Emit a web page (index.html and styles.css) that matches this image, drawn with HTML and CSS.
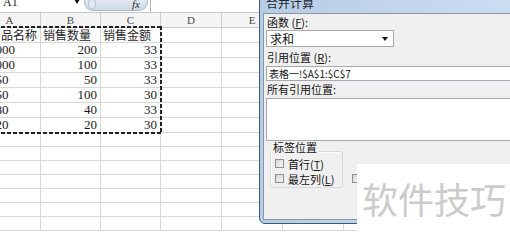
FILE: index.html
```html
<html>
	<head>
		<title>合并计算</title>
		<link rel="stylesheet" href="styles.css">
	</head>
	<body>
		<div class="sheet">
			<div class="formulabar">
				<div class="namebox"><span class="name">A1</span><span class="namearrow"></span></div>
				<div class="fxpill"><span class="knob"></span><span class="fx">fx</span></div>
				<div class="formula"></div>
			</div>
			<table class="grid">
				<colgroup>
					<col class="cola"><col class="colb"><col class="colb"><col class="colc"><col class="colc"><col class="colc"><col class="colc"><col class="colc"><col class="colc">
				</colgroup>
				<tr class="head"><th>A</th><th>B</th><th>C</th><th>D</th><th>E</th><th>F</th><th>G</th><th>H</th><th>I</th></tr>
				<tr><td class="first">产品名称</td><td class="txt">销售数量</td><td class="txt">销售金额</td><td></td><td></td><td></td><td></td><td></td><td></td></tr>
				<tr><td class="first">1000</td><td class="num">200</td><td class="num">33</td><td></td><td></td><td></td><td></td><td></td><td></td></tr>
				<tr><td class="first">2000</td><td class="num">100</td><td class="num">33</td><td></td><td></td><td></td><td></td><td></td><td></td></tr>
				<tr><td class="first">350</td><td class="num">50</td><td class="num">33</td><td></td><td></td><td></td><td></td><td></td><td></td></tr>
				<tr><td class="first">450</td><td class="num">100</td><td class="num">30</td><td></td><td></td><td></td><td></td><td></td><td></td></tr>
				<tr><td class="first">380</td><td class="num">40</td><td class="num">33</td><td></td><td></td><td></td><td></td><td></td><td></td></tr>
				<tr><td class="first">120</td><td class="num">20</td><td class="num">30</td><td></td><td></td><td></td><td></td><td></td><td></td></tr>
				<tr><td></td><td></td><td></td><td></td><td></td><td></td><td></td><td></td><td></td></tr>
				<tr><td></td><td></td><td></td><td></td><td></td><td></td><td></td><td></td><td></td></tr>
				<tr><td></td><td></td><td></td><td></td><td></td><td></td><td></td><td></td><td></td></tr>
				<tr><td></td><td></td><td></td><td></td><td></td><td></td><td></td><td></td><td></td></tr>
				<tr><td></td><td></td><td></td><td></td><td></td><td></td><td></td><td></td><td></td></tr>
				<tr><td></td><td></td><td></td><td></td><td></td><td></td><td></td><td></td><td></td></tr>
				<tr><td></td><td></td><td></td><td></td><td></td><td></td><td></td><td></td><td></td></tr>
			</table>
			<div class="marquee"></div>
		</div>

		<div class="dialog">
			<div class="dlgtitle">合并计算</div>
			<div class="dlgbody">
				<div class="label">函数 (<u>F</u>):</div>
				<div class="combo"><span>求和</span><span class="comboarrow"></span></div>
				<div class="label">引用位置 (<u>R</u>):</div>
				<div class="input">表格一!$A$1:$C$7</div>
				<div class="label">所有引用位置:</div>
				<div class="listbox"></div>
				<div class="grouprow">
					<div class="groupwrap">
						<div class="grouptitle">标签位置</div>
						<div class="group">
							<div class="check"><span class="box"></span><span>首行(<u>T</u>)</span></div>
							<div class="check"><span class="box"></span><span>最左列(<u>L</u>)</span></div>
						</div>
					</div>
					<span class="box extra"></span>
				</div>
			</div>
		</div>

		<div class="watermark">软件技巧</div>
	</body>
</html>
```

FILE: styles.css
```css
body{
	margin: 0;
	width: 510px;
	height: 240px;
	overflow: hidden;
	position: relative;
	background: #ffffff;
	font-family: "Liberation Serif", "Noto Sans CJK SC", serif;
	color: #1a1a1a;
}

/* spreadsheet behind the dialog */
div.sheet{
	position: relative;
}
div.formulabar{
	display: flex;
	height: 12px;
	border-bottom: 1px solid #c4c8cc;
	overflow: hidden;
}
div.namebox{
	width: 84px;
	display: flex;
	justify-content: space-between;
	padding: 0 4px 0 3px;
	box-sizing: border-box;
}
span.name{
	font-size: 12px;
	line-height: 12px;
	margin-top: -4px;
}
span.namearrow{
	width: 0;
	height: 0;
	margin-top: -1px;
	border-left: 3px solid transparent;
	border-right: 3px solid transparent;
	border-top: 5px solid #111;
}
div.fxpill{
	width: 64px;
	height: 18px;
	margin-top: -7px;
	border: 1px solid #a9b8ca;
	border-radius: 9px;
	background: linear-gradient(#eef2f7, #cfdae7);
	display: flex;
	justify-content: space-between;
	align-items: flex-end;
	padding: 0 7px 1px 3px;
	box-sizing: border-box;
}
span.knob{
	width: 6px;
	height: 8px;
	border-radius: 3px;
	background: #dfe6ef;
	border: 1px solid #b8c5d5;
}
span.fx{
	font-style: italic;
	font-size: 11px;
	line-height: 10px;
	color: #333;
}
div.formula{
	flex: 1;
	border-left: 1px solid #b4b9bf;
	margin-left: 2px;
}

table.grid{
	margin-left: -22px;
	border-collapse: collapse;
	table-layout: fixed;
	width: 549px;
	font-size: 13px;
}
col.cola{ width: 62px; }
col.colb{ width: 60px; }
col.colc{ width: 61px; }
td, th{
	border: 1px solid #d6d8da;
	height: 14px;
	padding: 0;
	line-height: 14px;
	white-space: nowrap;
	overflow: hidden;
}
tr.head th{
	border-top: none;
	border-color: #c9ccd0;
	background: #f4f4f4;
	font-weight: normal;
	font-size: 11px;
	color: #4a4a4a;
}
td.first{
	padding-left: 10px;
	text-align: left;
}
td.txt{
	padding-left: 2px;
	text-align: left;
	font-family: "Noto Sans CJK SC", sans-serif;
	font-size: 12px;
	color: #2a2a2a;
}
tr:nth-child(2) td.first{
	font-family: "Noto Sans CJK SC", sans-serif;
	font-size: 12px;
}
td.num{
	text-align: right;
	padding-right: 3px;
}

/* copy marquee around A1:C7 */
div.marquee{
	position: absolute;
	left: -5px;
	top: 26px;
	width: 167px;
	height: 108px;
	background:
		repeating-linear-gradient(90deg, #222 0 4px, transparent 4px 6px) top / 100% 2px no-repeat,
		repeating-linear-gradient(90deg, #222 0 4px, transparent 4px 6px) bottom / 100% 2px no-repeat,
		repeating-linear-gradient(180deg, #222 0 4px, transparent 4px 6px) right / 2px 100% no-repeat;
}

/* floating dialog window */
div.dialog{
	position: absolute;
	left: 259px;
	top: -8px;
	width: 300px;
	height: 232px;
	box-sizing: border-box;
	border: 1px solid #3f5a6b;
	border-radius: 6px;
	background: linear-gradient(90deg, #b7cce5, #cfe0f2);
	padding: 0 3px 3px 3px;
	display: flex;
	flex-direction: column;
	font-family: "Noto Sans CJK SC", sans-serif;
	font-size: 11px;
	color: #141414;
}
div.dlgtitle{
	height: 20px;
	line-height: 20px;
	font-size: 12px;
	padding-left: 3px;
	color: #1c2733;
}
div.dlgbody{
	flex: 1;
	background: #f0f0f0;
	border: 1px solid #8497ab;
	padding: 2px 0 0 2px;
}
div.label{
	line-height: 13px;
	height: 13px;
	padding-left: 1px;
}
div.combo{
	width: 128px;
	height: 17px;
	margin-top: 1px;
	margin-bottom: 4px;
	box-sizing: border-box;
	border: 1px solid #a6a9ae;
	background: #ffffff;
	display: flex;
	justify-content: space-between;
	align-items: center;
	padding: 0 5px 0 3px;
	font-size: 12px;
}
span.comboarrow{
	width: 0;
	height: 0;
	border-left: 3px solid transparent;
	border-right: 3px solid transparent;
	border-top: 4px solid #111;
}
div.input{
	height: 15px;
	margin-top: 2px;
	margin-bottom: 2px;
	box-sizing: border-box;
	border: 1px solid #a6a9ae;
	background: #ffffff;
	line-height: 13px;
	padding-left: 2px;
	font-size: 10px;
}
div.listbox{
	height: 43px;
	margin-top: 2px;
	box-sizing: border-box;
	border: 1px solid #a6a9ae;
	background: #ffffff;
}
div.grouprow{
	display: flex;
	margin-top: 1px;
}
div.groupwrap{
	margin-left: 4px;
	width: 73px;
	flex-shrink: 0;
}
div.grouptitle{
	position: relative;
	z-index: 1;
	width: fit-content;
	background: #f0f0f0;
	line-height: 11px;
	height: 11px;
	padding: 0 2px;
	margin-left: 1px;
	margin-bottom: -2px;
	font-size: 11px;
}
div.group{
	height: 37px;
	box-sizing: border-box;
	border: 1px solid #d3d9df;
	border-radius: 3px;
	box-shadow: inset 1px 1px 0 #ffffff;
	padding: 4px 0 0 4px;
}
div.check{
	display: flex;
	align-items: center;
	height: 15px;
	gap: 4px;
	font-size: 11px;
	white-space: nowrap;
}
span.box{
	width: 9px;
	height: 9px;
	flex-shrink: 0;
	box-sizing: border-box;
	border: 1px solid #8e8f8f;
	background: linear-gradient(135deg, #d8d8d8, #f6f6f6);
}
span.extra{
	align-self: flex-end;
	margin: 0 0 5px 9px;
}

/* site watermark in the corner */
div.watermark{
	position: absolute;
	left: 357px;
	top: 164px;
	width: 153px;
	height: 76px;
	box-sizing: border-box;
	background: #ffffff;
	padding: 16px 0 0 5px;
	font-family: "Noto Sans CJK SC", sans-serif;
	font-size: 36px;
	line-height: 36px;
	color: #cbcbcb;
	white-space: nowrap;
}
```
